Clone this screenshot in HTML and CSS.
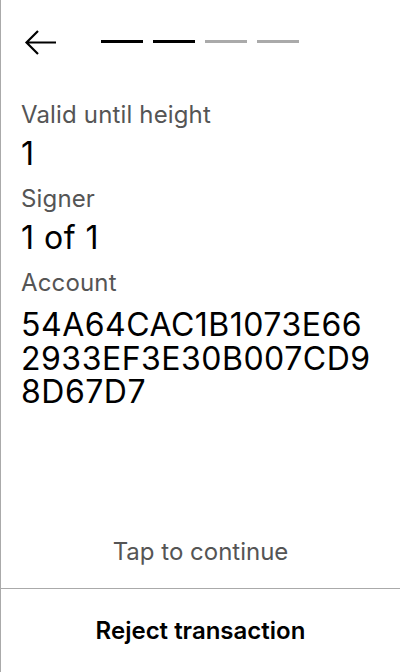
FILE: index.html
```html
<!DOCTYPE html>
<html>
<head>
<meta charset="utf-8">
<link rel="stylesheet" href="styles.css">
</head>
<body>
<div class="screen">
  <header class="header">
    <svg class="back" width="34" height="28" viewBox="0 0 34 28">
      <path d="M32 13.5H3M14 2L2.5 13.5L14 25" fill="none" stroke="#000" stroke-width="2.2"/>
    </svg>
    <div class="steps">
      <span class="step done"></span>
      <span class="step done"></span>
      <span class="step"></span>
      <span class="step"></span>
    </div>
  </header>
  <main class="content">
    <div class="label first">Valid until height</div>
    <div class="value">1</div>
    <div class="label">Signer</div>
    <div class="value">1 of 1</div>
    <div class="label">Account</div>
    <div class="value account">
      <div class="line">54A64CAC1B1073E66</div>
      <div class="line">2933EF3E30B007CD9</div>
      <div class="line">8D67D7</div>
    </div>
  </main>
  <div class="tap">Tap to continue</div>
  <div class="reject">Reject transaction</div>
</div>
</body>
</html>
```
FILE: styles.css
```css
html, body { margin: 0; padding: 0; background: #fff; }
body { font-family: Inter, "Noto Sans", sans-serif; color: #000; }
.screen {
  width: 400px; height: 672px; box-sizing: border-box;
  border-left: 1px solid #aaa;
  display: flex; flex-direction: column;
}
.header { display: flex; align-items: center; height: 86px; padding-left: 23px; flex: none; }
.back { display: block; }
.steps { display: flex; gap: 10px; margin-left: 43px; margin-top: -3px; }
.step { width: 42px; height: 3px; background: #aaa; }
.step.done { background: #000; }
.content { padding: 13px 0 0 20px; flex: 1; }
.label { font-size: 24px; color: #555; line-height: 32px; margin-top: 12px; letter-spacing: 0.15px; }
.label.first { margin-top: 0; }
.value { font-size: 32px; line-height: 34px; margin-top: 6px; letter-spacing: 0.5px; }
.value.account { margin-top: 9px; }
.line { height: 33.5px; line-height: 33.5px; }
.tap { text-align: center; font-size: 24px; line-height: 29px; color: #555; padding-bottom: 22px; }
.reject {
  border-top: 1px solid #aaa; height: 84px; box-sizing: border-box;
  display: flex; align-items: center; justify-content: center;
  font-size: 24px; font-weight: 600;
}
```
